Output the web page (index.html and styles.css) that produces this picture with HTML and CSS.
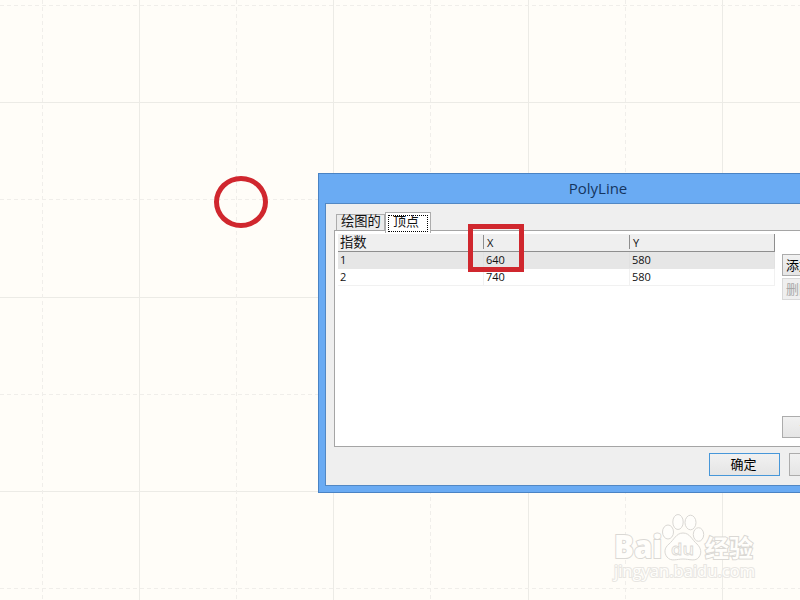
FILE: index.html
```html
<!DOCTYPE html>
<html lang="zh-CN">
<head>
  <meta charset="UTF-8">
  <title>PolyLine</title>
  <link rel="stylesheet" href="styles.css">
</head>
<body>
  <div class="canvas">
    <!-- Grid -->
    <svg class="grid" width="800" height="600" viewBox="0 0 800 600">
      <path class="solid" d="M139.5 0V600M333.5 0V600M528.5 0V600M722.5 0V600M0 102.5H800M0 297.5H800M0 491.5H800"/>
      <path class="dashed" d="M42.5 0V600M236.5 0V600M430.5 0V600M625.5 0V600M0 5.5H800M0 199.5H800M0 394.5H800M0 588.5H800"/>
    </svg>

    <!-- Dialog -->
    <div class="window">
      <div class="titlebar">PolyLine</div>
      <div class="client">
        <div class="tabs">
          <div class="tab">绘图的</div>
          <div class="tab active"><span>顶点</span></div>
        </div>
        <div class="page">
          <div class="list">
            <div class="row head"><span class="index">指数</span><span>X</span><span>Y</span></div>
            <div class="row selected"><span>1</span><span>640</span><span>580</span></div>
            <div class="row"><span>2</span><span>740</span><span>580</span></div>
          </div>
          <div class="side">
            <button>添加</button>
            <button disabled>删除</button>
            <button class="last">
              <svg width="12" height="12" viewBox="0 0 12 12"><path d="M6 1L11 6H8V11H4V6H1Z" fill="#fbe3b4"/></svg>
            </button>
          </div>
        </div>
        <div class="footer">
          <button class="ok">确定</button>
          <button>取消</button>
        </div>
      </div>
    </div>

    <!-- Red marks -->
    <div class="mark circle"></div>
    <div class="mark box"></div>

    <!-- Watermark -->
    <svg class="watermark" width="160" height="80" viewBox="0 0 160 80">
      <text class="latin logo" x="4" y="48" font-size="32" textLength="48" lengthAdjust="spacingAndGlyphs">Bai</text>
      <ellipse cx="58" cy="22" rx="5.5" ry="7"/>
      <ellipse cx="68" cy="12" rx="5.2" ry="7.5"/>
      <ellipse cx="80.5" cy="12.5" rx="5.5" ry="7.3"/>
      <ellipse cx="88.5" cy="24.5" rx="5.2" ry="6.8"/>
      <path d="M73 23C66 23 64 30 59 34C54 38 54 43 57 47C61 52 67 49 73 49C79 49 86 52 89 47C92 43 91 38 87 34C82 30 80 23 73 23Z"/>
      <text class="latin du" x="61" y="45" font-size="17" textLength="23" lengthAdjust="spacingAndGlyphs">du</text>
      <text class="cjk" x="95" y="47" font-size="24" textLength="48">经验</text>
      <text class="latin url" x="4" y="67" font-size="16" textLength="141" lengthAdjust="spacingAndGlyphs">jingyan.baidu.com</text>
    </svg>
  </div>
</body>
</html>
```
FILE: styles.css
```css
* {
  box-sizing: border-box;
}

body {
  margin: 0;
  font-family: "Open Sans", "Noto Sans CJK SC", sans-serif;
  font-size: 13px;
  color: #111;
}

.canvas {
  position: relative;
  width: 800px;
  height: 600px;
  overflow: hidden;
  background: #fffdf8;
}

.grid {
  display: block;
}

.grid path {
  fill: none;
}

.solid {
  stroke: #ecebe6;
}

.dashed {
  stroke: #f0eeea;
  stroke-dasharray: 4 3;
}

/* Dialog */
.window {
  position: absolute;
  left: 318px;
  top: 173px;
  width: 560px;
  height: 320px;
  padding: 0 6px 6px;
  background: #6aabf3;
  border: 1px solid #4a83c4;
}

.titlebar {
  height: 29px;
  line-height: 29px;
  font-size: 15px;
  text-align: center;
  color: #15355f;
}

.client {
  height: 283px;
  padding: 8px 8px 0;
  background: #efefef;
  border: 1px solid #5288c4;
}

/* Tabs */
.tabs {
  position: relative;
  display: flex;
  align-items: flex-end;
  height: 18px;
  padding-left: 2px;
}

.tab {
  width: 49px;
  height: 16px;
  padding-left: 4px;
  line-height: 13px;
  font-size: 13.3px;
  background: #ebebeb;
  border: 1px solid #acacac;
  border-bottom: none;
  white-space: nowrap;
}

.tab.active {
  width: 46px;
  height: 21px;
  padding: 2px;
  margin-bottom: -3px;
  background: #fff;
}

.tab.active span {
  display: block;
  height: 17px;
  line-height: 11px;
  padding-left: 4px;
  font-size: 13px;
  border: 1px dotted #000;
}

.page {
  display: flex;
  height: 217px;
  padding: 3px 0 0 3px;
  background: #fff;
  border: 1px solid #a5a5a5;
}

/* Vertex list */
.list {
  width: 437px;
}

.row {
  display: grid;
  grid-template-columns: 146px 146px 145px;
  height: 17px;
  line-height: 16px;
  font-size: 11px;
  border-bottom: 1px solid #f1f1f1;
}

.row span {
  padding-left: 2px;
  border-right: 1px solid #f1f1f1;
}

.row.head {
  height: 18px;
  line-height: 18px;
  background: #efefef;
  border-right: 1px solid #8e8e8e;
  border-bottom-color: #8e8e8e;
}

.row.head span {
  height: 14px;
  margin-top: 1px;
  padding-left: 3px;
  line-height: 16px;
  border-right: 1px solid #8e8e8e;
}

.row.head span:last-child {
  border-right: none;
}

.row.head .index {
  padding-left: 2px;
  font-size: 13.3px;
  line-height: 14px;
}

.row.selected {
  background: #e6e6e6;
  border-color: #e6e6e6;
}

.row.selected span {
  border-color: #e1e1e1;
}

/* Buttons */
button {
  appearance: none;
  width: 71px;
  height: 23px;
  padding: 0;
  font: inherit;
  line-height: 19px;
  color: #000;
  background: linear-gradient(#f1f1f1, #e5e5e5);
  border: 1px solid #acacac;
  border-radius: 0;
}

button:disabled {
  color: #a8a8a8;
  background: #efefef;
  border-color: #d9d9d9;
}

.side {
  display: flex;
  flex-direction: column;
  gap: 2px;
  padding: 20px 0 8px 7px;
}

.side button {
  width: 71px;
  height: 22px;
  padding-left: 3px;
  line-height: 16px;
  text-align: left;
}

.side button.last {
  margin-top: auto;
  padding-left: 15px;
}

.footer {
  display: flex;
  gap: 9px;
  padding: 6px 0 0 375px;
}

.footer button {
  flex: none;
}

.footer .ok {
  padding-right: 2px;
  border: 1px solid #4797d9;
}

/* Red marks */
.mark {
  position: absolute;
  border: 5px solid #d0272e;
}

.circle {
  left: 214px;
  top: 176px;
  width: 54px;
  height: 52px;
  border-radius: 50%;
}

.box {
  left: 468px;
  top: 224px;
  width: 56px;
  height: 48px;
}

/* Watermark */
.watermark {
  position: absolute;
  left: 610px;
  top: 510px;
  fill: #fffefb;
  stroke: #dad8d4;
  stroke-width: 1;
}

.watermark text {
  font-weight: bold;
  paint-order: stroke;
  stroke-width: 2;
}

.watermark .latin {
  font-family: "Open Sans", sans-serif;
}

.watermark .logo {
  font-weight: 800;
}

.watermark .du {
  font-weight: 600;
  paint-order: normal;
  stroke-width: 0.8;
}

.watermark .cjk {
  font-family: "Noto Sans CJK SC", sans-serif;
}

.watermark .url {
  font-weight: normal;
  stroke: #e8e6e2;
}
```
